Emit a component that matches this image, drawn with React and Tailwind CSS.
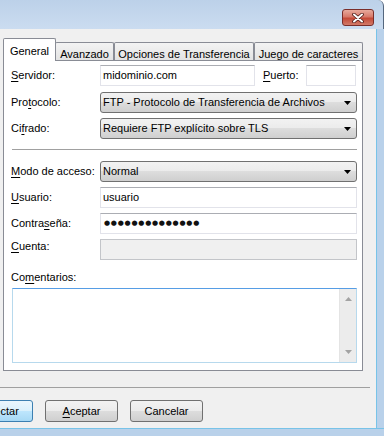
import React from "react";

const font = "font-['Liberation_Sans',Arial,sans-serif]";

function U({ children }) {
  return <span className="underline underline-offset-[2px]">{children}</span>;
}

function Label({ children, className = "" }) {
  return (
    <div className={`w-[89px] shrink-0 text-[11px] leading-[13px] text-black ${className}`}>{children}</div>
  );
}

function TextBox({ children, className = "", disabled }) {
  return (
    <div
      className={`h-[21px] flex items-center pl-[2px] text-[11px] text-black border ${
        disabled ? "bg-[#f0f0f0] border-[#c3c5c9]" : "bg-white border-[#e2e3ea] border-t-[#abadb3]"
      } ${className}`}
    >
      {children}
    </div>
  );
}

function Arrow({ color = "#000" }) {
  return (
    <svg width="7" height="4" viewBox="0 0 7 4">
      <path d="M0 0h7l-3.5 4z" fill={color} />
    </svg>
  );
}

function Select({ children }) {
  return (
    <div className="flex-1 h-[21px] flex items-center justify-between pl-[2px] pr-[5px] text-[11px] text-black rounded-[3px] border border-[#707070] bg-[linear-gradient(#f2f2f2,#ebebeb_50%,#dddddd_50%,#cfcfcf)]">
      <span>{children}</span>
      <Arrow />
    </div>
  );
}

function Row({ children, className = "" }) {
  return <div className={`flex items-center ${className}`}>{children}</div>;
}

function Button({ children, primary, className = "" }) {
  return (
    <div
      className={`w-[73px] h-[22px] shrink-0 flex items-center justify-center text-[11px] text-black rounded-[3px] border ${
        primary
          ? "border-[#3c7fb1] bg-[linear-gradient(#eaf6fd,#d9f0fc_50%,#bee6fd_50%,#a7d9f5)]"
          : "border-[#707070] bg-[linear-gradient(#f2f2f2,#ebebeb_50%,#dddddd_50%,#cfcfcf)]"
      } ${className}`}
    >
      {children}
    </div>
  );
}

export default function App() {
  return (
    <div className={`w-[384px] h-[436px] overflow-hidden flex flex-col ${font}`}>
      {/* Title bar */}
      <div className="h-[29px] shrink-0 flex items-start justify-end pt-[9px] pr-[9px] bg-[linear-gradient(#bcd1e9,#cbdcf0)] border-r border-[#55677e] rounded-tr-[6px]">
        <div className="w-[32px] h-[17px] rounded-[3px] border border-[#7a2e2a] bg-[linear-gradient(#e8aa9c,#d7796a_45%,#c44a38_55%,#d27a68)] flex items-center justify-center">
          <svg width="12" height="10" viewBox="0 0 12 10">
            <path d="M2 1.5l8 7M10 1.5l-8 7" stroke="#4b1a16" strokeWidth="3.6" strokeLinecap="round" />
            <path d="M2 1.5l8 7M10 1.5l-8 7" stroke="#fff" strokeWidth="2" strokeLinecap="round" />
          </svg>
        </div>
      </div>

      <div className="flex flex-1 min-h-0">
        <div className="w-[376px] shrink-0 bg-[#f0f0f0] flex flex-col">
          {/* Tabs */}
          <div className="flex items-end pl-[3px] pt-[9px] text-[11px] text-black">
            <div className="relative z-10 w-[53px] h-[23px] -mb-px bg-white border border-b-0 border-[#898c95] rounded-t-[2px] flex justify-center pt-[4px]">
              General
            </div>
            <div className="-ml-px w-[59px] h-[18px] border border-b-0 border-[#898c95] rounded-t-[2px] bg-[linear-gradient(#f3f3f3,#e3e3e3)] flex justify-center pt-[3px]">
              Avanzado
            </div>
            <div className="w-[140px] h-[18px] border border-b-0 border-[#898c95] rounded-t-[2px] bg-[linear-gradient(#f3f3f3,#e3e3e3)] flex justify-center pt-[3px]">
              Opciones de Transferencia
            </div>
            <div className="w-[109px] h-[18px] border border-b-0 border-[#898c95] rounded-t-[2px] bg-[linear-gradient(#f3f3f3,#e3e3e3)] flex justify-center pt-[3px]">
              Juego de caracteres
            </div>
          </div>

          {/* Panel */}
          <div className="ml-[3px] w-[360px] h-[311px] shrink-0 border border-[#898c95] bg-white flex flex-col pl-[7px] pr-[5px] pt-[4px]">
            <Row>
              <Label>
                <U>S</U>ervidor:
              </Label>
              <TextBox className="w-[155px]">midominio.com</TextBox>
              <div className="flex-1 ml-[8px] text-[11px] leading-[13px]">
                <U>P</U>uerto:
              </div>
              <TextBox className="w-[50px] mr-[1px]" />
            </Row>
            <Row className="mt-[6px]">
              <Label>
                Pro<U>t</U>ocolo:
              </Label>
              <Select>FTP - Protocolo de Transferencia de Archivos</Select>
            </Row>
            <Row className="mt-[5px]">
              <Label>
                Ci<U>f</U>rado:
              </Label>
              <Select>Requiere FTP explícito sobre TLS</Select>
            </Row>

            <div className="mt-[10px] ml-[1px] h-px bg-[#a0a0a0]" />

            <Row className="mt-[11px]">
              <Label>
                <U>M</U>odo de acceso:
              </Label>
              <Select>Normal</Select>
            </Row>
            <Row className="mt-[5px]">
              <Label>
                <U>U</U>suario:
              </Label>
              <TextBox className="flex-1">usuario</TextBox>
            </Row>
            <Row className="mt-[5px]">
              <Label>
                Contra<U>s</U>eña:
              </Label>
              <TextBox className="flex-1 pl-[3px]">
                <span className="font-['DejaVu_Sans',sans-serif] text-[7px] tracking-[0.75px] leading-none text-[#111]">
                  ●●●●●●●●●●●●●●
                </span>
              </TextBox>
            </Row>
            <Row className="mt-[5px] items-start">
              <Label className="pt-[1px]">
                <U>C</U>uenta:
              </Label>
              <TextBox className="flex-1" disabled />
            </Row>

            <div className="mt-[11px] text-[11px] leading-[13px]">
              Co<U>m</U>entarios:
            </div>
            <div className="mt-[4px] ml-[1px] h-[75px] flex justify-end border border-[#b7d9ed] border-t-[#569de5] bg-white">
              <div className="w-[17px] bg-[#ececec] border-l border-[#e4e4e4] flex flex-col items-center justify-between py-[8px]">
                <div className="rotate-180">
                  <Arrow color="#a3a3a3" />
                </div>
                <Arrow color="#a3a3a3" />
              </div>
            </div>
          </div>

          {/* Bottom separator & buttons */}
          <div className="mt-[16px] w-[370px] h-px bg-[#a0a0a0]" />
          <div className="mt-[12px] flex gap-[12px]">
            <Button primary className="-ml-[40px]">
              Conectar
            </Button>
            <Button>
              <U>A</U>ceptar
            </Button>
            <Button>Cancelar</Button>
          </div>
        </div>
        <div className="flex-1 bg-[#b9d1ea] border-l border-[#78c3e8]" />
      </div>

      <div className="h-[8px] shrink-0 bg-[#b9d1ea] border-t border-[#78c3e8]" />
    </div>
  );
}
